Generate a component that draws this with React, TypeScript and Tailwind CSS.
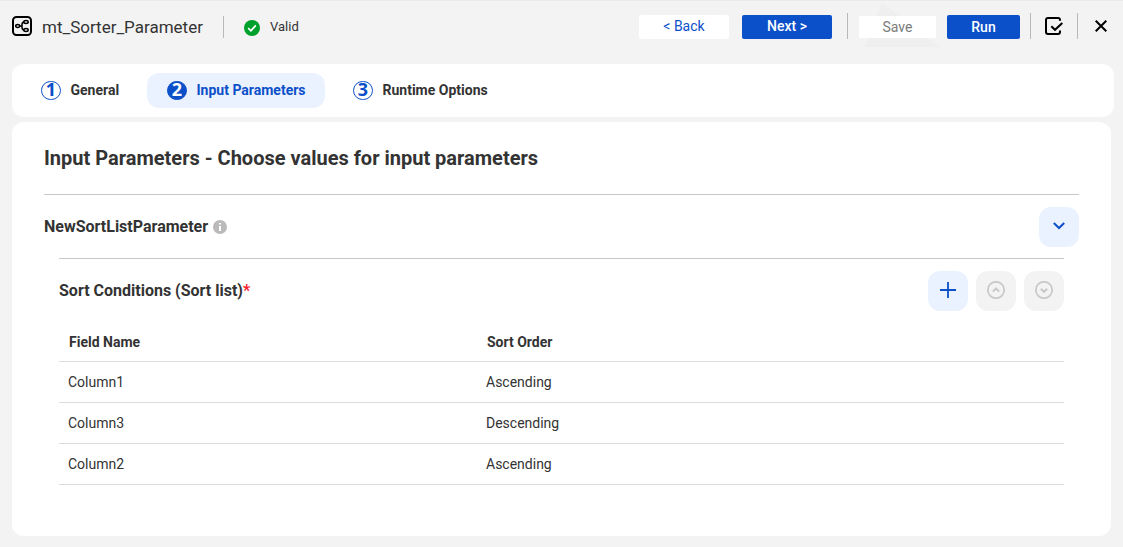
import { useState } from "react";
import clsx from "clsx";

const steps = [
  { number: 1, name: "General", width: "w-[118px]" },
  { number: 2, name: "Input Parameters", width: "w-[178px]" },
  { number: 3, name: "Runtime Options", width: "w-[180px]" },
];

const rows = [
  { field: "Column1", order: "Ascending" },
  { field: "Column3", order: "Descending" },
  { field: "Column2", order: "Ascending" },
];

const MappingIcon = () => (
  <svg width="20" height="20" viewBox="0 0 20 20" fill="none" stroke="#000">
    <rect x="1" y="1" width="18" height="18" rx="3.5" strokeWidth="2" />
    <g strokeWidth="1.5">
      <ellipse cx="5.7" cy="10" rx="2" ry="1.4" />
      <ellipse cx="14" cy="6" rx="2.2" ry="1.5" />
      <ellipse cx="14" cy="14" rx="2.2" ry="1.5" />
      <path d="M7.7 10H10M12.1 6C10.5 6.2 10 7.2 10 8.5V11.5C10 12.8 10.5 13.8 12.1 14" />
    </g>
  </svg>
);

const ValidIcon = () => (
  <svg width="16" height="16" viewBox="0 0 16 16" fill="none">
    <circle cx="8" cy="8" r="8" fill="#00a02c" />
    <path d="M4.2 8.2L6.9 10.8L11.8 5.4" stroke="#fff" strokeWidth="1.8" />
  </svg>
);

const ValidateIcon = () => (
  <svg width="20" height="20" viewBox="0 0 20 20" fill="none" stroke="#000" strokeWidth="2">
    <path d="M16 4.8V4C16 2.7 15.3 2 14 2H4C2.7 2 2 2.7 2 4V16C2 17.3 2.7 18 4 18H14C15.3 18 16 17.3 16 16V14.5" />
    <path d="M7.3 10.2L11 13.8L18.3 6.9" />
  </svg>
);

const Divider = ({ className }: { className?: string }) => (
  <div className={clsx("w-px shrink-0 bg-[#b8b8b8]", className)} />
);

const Header = () => (
  <header className="flex h-16 shrink-0 items-start border-t border-[#ebebeb] pl-3">
    <div className="mt-[15px]">
      <MappingIcon />
    </div>
    <div className="ml-[10px] mt-[14px] w-[161px] whitespace-nowrap text-[17px] leading-6">
      mt_Sorter_Parameter
    </div>
    <Divider className="ml-5 mt-[15px] h-[22px]" />
    <div className="ml-5 mt-[19px]">
      <ValidIcon />
    </div>
    <div className="ml-[10px] mt-[16px] text-[13px] leading-5">Valid</div>

    <div className="relative ml-auto flex items-start">
      <svg
        className="absolute left-[225px] top-[2px]"
        width="80"
        height="46"
        viewBox="0 0 80 46"
        fill="#efefef"
      >
        <path d="M18 0L13 13H35ZM5 35L0 44H76L62 35Z" />
      </svg>
      <button className="mt-[14px] h-6 w-[90px] rounded-xs bg-white pb-0.5 text-sm leading-[22px] text-[#0b4fc9]">
        &lt; Back
      </button>
      <button className="ml-[13px] mt-[14px] h-6 w-[90px] rounded-xs bg-[#0b4fc9] pb-0.5 text-sm font-medium leading-[22px] text-white">
        Next &gt;
      </button>
      <Divider className="ml-[15px] mt-3 h-[26px]" />
      <button className="relative ml-[11px] mt-[15px] h-[22px] w-[77px] bg-white text-sm leading-[22px] text-[#7c7c7c]">
        Save
      </button>
      <button className="ml-[11px] mt-[14px] h-6 w-[73px] rounded-xs bg-[#0b4fc9] text-sm font-medium leading-6 text-white">
        Run
      </button>
      <Divider className="ml-[10px] mt-3 h-[26px]" />
      <div className="ml-[13px] mt-[15px]">
        <ValidateIcon />
      </div>
      <Divider className="ml-[13px] mt-3 h-[26px]" />
      <svg
        className="ml-[17px] mr-4 mt-[19px]"
        width="12"
        height="12"
        viewBox="0 0 12 12"
        stroke="#000"
        strokeWidth="2"
      >
        <path d="M0.7 0.7L11.3 11.3M11.3 0.7L0.7 11.3" />
      </svg>
    </div>
  </header>
);

const App = () => {
  const [activeStep, setActiveStep] = useState(2);

  return (
    <div className="flex h-[547px] w-[1123px] flex-col overflow-hidden bg-[#f3f3f3] font-[Roboto,sans-serif] text-[#333]">
      <Header />

      <nav className="ml-3 flex h-[53px] w-[1102px] shrink-0 items-center gap-2 rounded-xl bg-white pl-[9px]">
        {steps.map((step) => (
          <button
            key={step.number}
            onClick={() => setActiveStep(step.number)}
            className={clsx(
              "flex h-[35px] items-center whitespace-nowrap rounded-xl pl-5 text-sm font-bold",
              step.width,
              activeStep === step.number && "bg-[#ebf2ff] text-[#0b4fc9]"
            )}
          >
            <span
              className={clsx(
                "mr-[9.5px] flex h-[19px] w-5 shrink-0 items-center justify-center rounded-full border border-[#0b4fc9] pb-[3px] font-['Noto_Sans',sans-serif] text-[18px] font-bold leading-none",
                activeStep === step.number
                  ? "bg-[#0b4fc9] text-white"
                  : "text-[#0b4fc9]"
              )}
            >
              {step.number}
            </span>
            <span className="pb-0.5">{step.name}</span>
          </button>
        ))}
      </nav>

      <main className="ml-3 mt-[5px] h-[414px] w-[1099px] shrink-0 rounded-xl bg-white px-8">
        <h1 className="h-[73px] border-b border-[#c8c8c8] pt-[22px] text-xl font-bold leading-7">
          Input Parameters - Choose values for input parameters
        </h1>

        <div className="flex h-[63px] items-center">
          <h2 className="text-base font-bold">NewSortListParameter</h2>
          <svg className="ml-[5px] mt-px" width="14" height="14" viewBox="0 0 14 14">
            <circle cx="7" cy="7" r="7" fill="#bababa" />
            <path d="M6 3H8V4.6H6ZM6 6H8V11H6Z" fill="#fff" />
          </svg>
          <button className="ml-auto mt-px flex size-10 items-center justify-center rounded-xl bg-[#ebf2ff]">
            <svg className="-mt-0.5" width="12" height="8" viewBox="0 0 12 8" fill="none" stroke="#0b4fc9" strokeWidth="2">
              <path d="M0.8 1L6 6L11.2 1" />
            </svg>
          </button>
        </div>

        <section className="mx-[15px] border-t border-[#c8c8c8]">
          <div className="flex h-16 items-center gap-2">
            <h3 className="mr-auto text-base font-bold">
              Sort Conditions (Sort list)<span className="text-[#f5222d]">*</span>
            </h3>
            <button className="flex size-10 items-center justify-center rounded-xl bg-[#ebf2ff]">
              <svg className="-mt-0.5" width="16" height="16" viewBox="0 0 16 16" stroke="#0b4fc9" strokeWidth="1.8">
                <path d="M8 0V16M0 8H16" />
              </svg>
            </button>
            <button disabled className="flex size-10 items-center justify-center rounded-xl bg-[#f3f3f3]">
              <svg width="20" height="20" viewBox="0 0 20 20" fill="none" stroke="#c8c8c8" strokeWidth="2">
                <circle cx="10" cy="9" r="8.2" strokeWidth="1.7" />
                <path d="M6.8 10.6L10 7.5L13.2 10.6" />
              </svg>
            </button>
            <button disabled className="flex size-10 items-center justify-center rounded-xl bg-[#f3f3f3]">
              <svg width="20" height="20" viewBox="0 0 20 20" fill="none" stroke="#c8c8c8" strokeWidth="2">
                <circle cx="10" cy="9" r="8.2" strokeWidth="1.7" />
                <path d="M6.8 7.7L10 10.8L13.2 7.7" />
              </svg>
            </button>
          </div>

          <div className="grid h-[39px] grid-cols-[418px_1fr] items-center border-b border-[#dcdcdc] pl-[10px] text-sm font-bold">
            <div>Field Name</div>
            <div>Sort Order</div>
          </div>
          {rows.map((row) => (
            <div
              key={row.field}
              className="grid h-[41px] grid-cols-[418px_1fr] items-center border-b border-[#dcdcdc] pl-[9px] text-sm"
            >
              <div>{row.field}</div>
              <div>{row.order}</div>
            </div>
          ))}
        </section>
      </main>
    </div>
  );
};

export default App;
